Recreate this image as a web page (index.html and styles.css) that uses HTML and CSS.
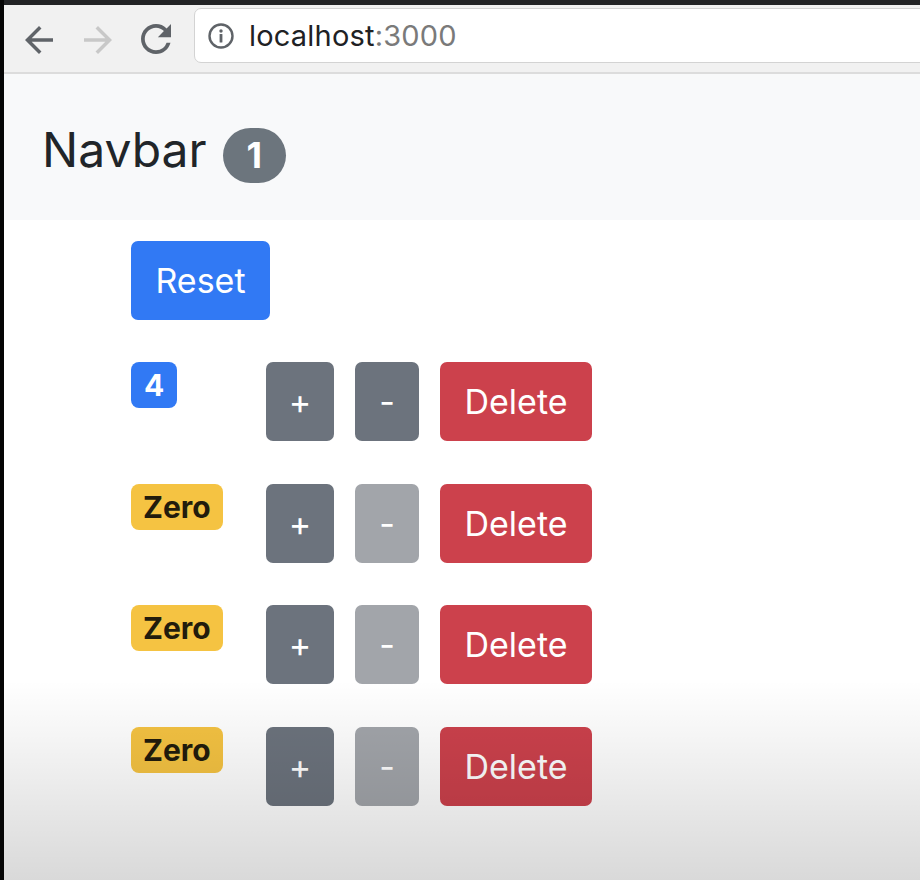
FILE: index.html
```html
<!DOCTYPE html>
<html lang="en">
<head>
<meta charset="utf-8">
<title>localhost:3000</title>
<link rel="stylesheet" href="styles.css">
</head>
<body>
<div class="frame">
  <div class="chrome-top"></div>
  <div class="toolbar">
    <svg class="nav-icon back" viewBox="4 4 16 16" width="28" height="28"><path d="M20 11H7.83l5.59-5.59L12 4l-8 8 8 8 1.41-1.41L7.83 13H20v-2z"/></svg>
    <svg class="nav-icon fwd" viewBox="4 4 16 16" width="28" height="28"><path d="M4 11h12.17l-5.59-5.59L12 4l8 8-8 8-1.41-1.41L16.17 13H4v-2z"/></svg>
    <svg class="nav-icon reload" viewBox="4 4 16 16" width="30" height="30"><path d="M17.65 6.35A7.958 7.958 0 0 0 12 4c-4.42 0-7.99 3.58-7.99 8s3.57 8 7.99 8c3.73 0 6.84-2.55 7.730-6h-2.08A5.99 5.99 0 0 1 12 18c-3.31 0-6-2.69-6-6s2.69-6 6-6c1.66 0 3.14 0.69 4.22 1.78L13 11h7V4l-2.35 2.35z"/></svg>
    <div class="omnibox">
      <svg class="info" viewBox="0 0 26 26" width="26" height="26"><circle cx="13" cy="13" r="11.5" fill="none" stroke="#5f6368" stroke-width="2.4"/><circle cx="13" cy="8" r="1.7" fill="#5f6368"/><rect x="11.6" y="11" width="2.8" height="8.5" rx="0.6" fill="#5f6368"/></svg>
      <span class="url">localhost<span class="port">:3000</span></span>
    </div>
  </div>

  <nav class="navbar">
    <span class="brand">Navbar</span>
    <span class="pill">1</span>
  </nav>

  <main class="main">
    <button class="btn btn-primary reset">Reset</button>
    <div class="counters">
      <div class="counter">
        <div class="badge-col"><span class="badge badge-primary">4</span></div>
        <div class="actions">
          <button class="btn btn-secondary sq">+</button>
          <button class="btn btn-secondary sq minus">-</button>
          <button class="btn btn-danger">Delete</button>
        </div>
      </div>
      <div class="counter">
        <div class="badge-col"><span class="badge badge-warning">Zero</span></div>
        <div class="actions">
          <button class="btn btn-secondary sq">+</button>
          <button class="btn btn-secondary sq minus disabled">-</button>
          <button class="btn btn-danger">Delete</button>
        </div>
      </div>
      <div class="counter">
        <div class="badge-col"><span class="badge badge-warning">Zero</span></div>
        <div class="actions">
          <button class="btn btn-secondary sq">+</button>
          <button class="btn btn-secondary sq minus disabled">-</button>
          <button class="btn btn-danger">Delete</button>
        </div>
      </div>
      <div class="counter">
        <div class="badge-col"><span class="badge badge-warning">Zero</span></div>
        <div class="actions">
          <button class="btn btn-secondary sq">+</button>
          <button class="btn btn-secondary sq minus disabled">-</button>
          <button class="btn btn-danger">Delete</button>
        </div>
      </div>
    </div>
  </main>
  <div class="shade"></div>
</div>
</body>
</html>
```

FILE: styles.css
```css
html, body {
  margin: 0;
  padding: 0;
  background: #fff;
  overflow: hidden;
}
body {
  width: 920px;
  height: 880px;
  font-family: Inter, "Liberation Sans", sans-serif;
  color: #212529;
}
.frame {
  position: relative;
  height: 880px;
  border-left: 4px solid #050505;
  box-sizing: border-box;
  overflow: hidden;
}
.chrome-top {
  height: 5px;
  background: #222325;
}
.toolbar {
  display: flex;
  align-items: flex-start;
  height: 69px;
  padding: 3px 0 0 21px;
  box-sizing: border-box;
  background: #f1f1f1;
  border-bottom: 2px solid #dcdcdc;
}
.nav-icon {
  fill: #5f6368;
  flex: none;
}
.nav-icon.back { margin-top: 18px; }
.nav-icon.fwd { margin: 18px 0 0 31px; fill: #c8c8c8; }
.nav-icon.reload { margin: 16px 0 0 29px; }
.omnibox {
  flex: 1;
  display: flex;
  align-items: center;
  height: 55px;
  margin: 0 -20px 0 23px;
  padding-left: 13px;
  background: #fff;
  border: 1px solid #d3d3d3;
  border-radius: 7px;
  box-sizing: border-box;
}
.info { flex: none; }
.url {
  margin-left: 15px;
  font-family: Inter, "Liberation Sans", sans-serif;
  font-size: 29px;
  color: #202124;
  letter-spacing: 0.2px;
}
.port { color: #7a7a7a; }

.navbar {
  display: flex;
  align-items: baseline;
  height: 146px;
  padding: 5px 0 0 38px;
  box-sizing: border-box;
  background: #f8f9fa;
  line-height: 141px;
}
.brand {
  font-size: 48px;
  color: #212529;
}
.pill {
  margin-left: 16px;
  display: inline-block;
  padding: 9px 24px 10px;
  line-height: 1;
  font-size: 36px;
  font-weight: 700;
  color: #fff;
  background: #6c757d;
  border-radius: 30px;
  position: relative;
  top: 1px;
}

.main {
  padding: 21px 0 0 127px;
}
.btn {
  display: inline-block;
  font-family: Inter, "Liberation Sans", sans-serif;
  font-size: 34px;
  line-height: 55px;
  padding: 12px 0;
  border: 0;
  border-radius: 7px;
  color: #fff;
  cursor: pointer;
}
.btn-primary { background: #3179f4; }
.btn-secondary { background: #6c737d; }
.btn-secondary.disabled { background: #a2a5aa; }
.btn-danger { background: #cc414c; width: 152px; }
.reset { width: 139px; }
.sq { width: 68px; }
.sq.minus { width: 64px; }

.counters {
  display: flex;
  flex-direction: column;
  gap: 42.7px;
  margin-top: 42px;
}
.counter {
  display: grid;
  grid-template-columns: 135px auto;
  align-items: start;
}
.actions {
  display: flex;
  gap: 21px;
}
.badge {
  display: inline-block;
  font-size: 30px;
  font-weight: 700;
  line-height: 1;
  padding: 8px 12px;
  border-radius: 8px;
}
.badge-primary { background: #3179f4; color: #fff; padding: 8px 13px; }
.badge-warning { background: #f5c342; color: #221c0c; }

.shade {
  position: absolute;
  left: -4px;
  right: 0;
  bottom: 0;
  height: 200px;
  background: linear-gradient(to bottom, rgba(0,0,0,0) 0%, rgba(0,0,0,0.05) 35%, rgba(0,0,0,0.15) 100%);
  pointer-events: none;
}
```
